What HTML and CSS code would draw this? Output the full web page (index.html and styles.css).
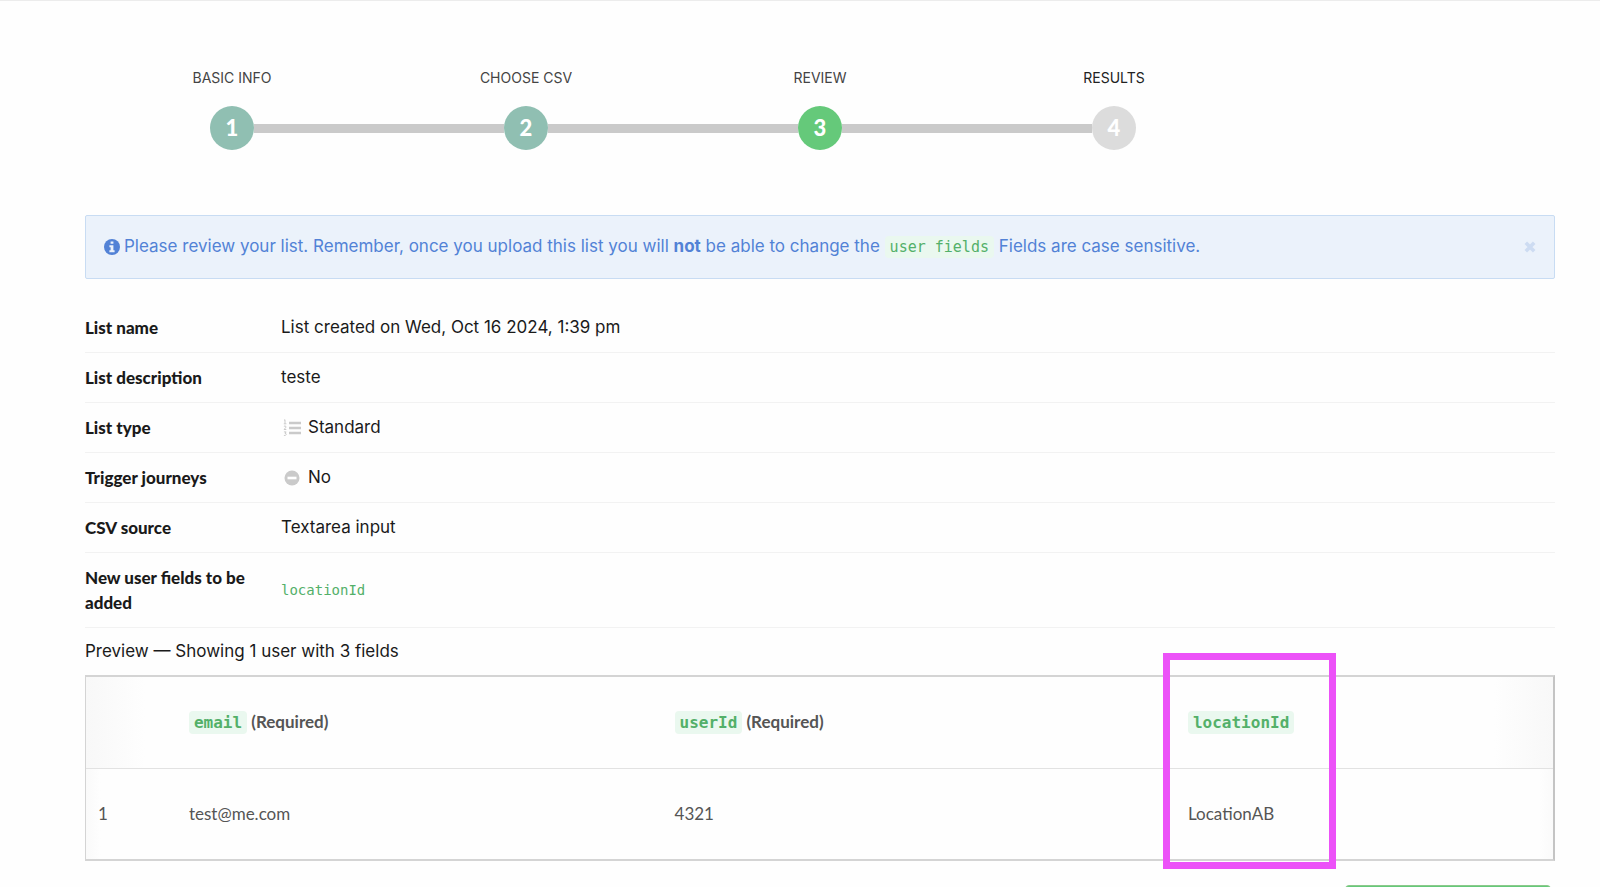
FILE: index.html
```html
<!DOCTYPE html>
<html lang="en">

<head>
    <meta charset="utf-8">
    <meta name="viewport" content="width=device-width, initial-scale=1.0">
    <title>Review list</title>
    <link rel="stylesheet" href="styles.css">
</head>

<body>

    <main>
        <ol class="steps">
            <li class="done">
                <p>BASIC INFO</p>
                <div class="track"><span class="number">1</span></div>
            </li>
            <li class="done">
                <p>CHOOSE CSV</p>
                <div class="track"><span class="number">2</span></div>
            </li>
            <li class="current">
                <p>REVIEW</p>
                <div class="track"><span class="number">3</span></div>
            </li>
            <li>
                <p>RESULTS</p>
                <div class="track"><span class="number">4</span></div>
            </li>
        </ol>

        <section class="alert">
            <svg class="info" viewBox="0 0 16 16" aria-hidden="true">
                <circle cx="8" cy="8" r="8" fill="currentColor" />
                <path d="M6.6 2.6h2.8v2.2H6.6zM5.4 6.2h4v5h1.2v2H5.4v-2h1.2v-3H5.4z" fill="#ebf2fb" />
            </svg>
            <p>Please review your list. Remember, once you upload this list you will <strong>not</strong> be able to change the <code>user fields</code> Fields are case sensitive.</p>
            <button class="close" type="button" aria-label="Close">
                <svg viewBox="0 0 10 10" aria-hidden="true">
                    <path d="M1.5 1.5l7 7M8.5 1.5l-7 7" stroke="currentColor" stroke-width="3" />
                </svg>
            </button>
        </section>

        <dl class="details">
            <div>
                <dt>List name</dt>
                <dd>List created on Wed, Oct 16 2024, 1:39 pm</dd>
            </div>
            <div>
                <dt>List description</dt>
                <dd>teste</dd>
            </div>
            <div>
                <dt>List type</dt>
                <dd>
                    <svg class="icon" viewBox="0 0 18 18" aria-hidden="true">
                        <path d="M6 4h12M6 9h12M6 14h12" stroke="currentColor" stroke-width="2.4" fill="none" />
                        <path d="M1 1.4l1-.7v4M.8 4.8h2.6M.9 7.4q1.2-1 2 0t-2 3.1h2.4M.9 12.9h2.2l-1 1.4q1.4.2 1 1.4t-2.2.7" stroke="currentColor" stroke-width="1" fill="none" />
                    </svg>
                    Standard
                </dd>
            </div>
            <div>
                <dt>Trigger journeys</dt>
                <dd>
                    <svg class="icon" viewBox="0 0 18 18" aria-hidden="true">
                        <circle cx="9" cy="9" r="7.5" fill="currentColor" />
                        <path d="M4.5 9h9" stroke="#fff" stroke-width="2.6" />
                    </svg>
                    No
                </dd>
            </div>
            <div>
                <dt>CSV source</dt>
                <dd>Textarea input</dd>
            </div>
            <div>
                <dt>New user fields to be added</dt>
                <dd><code>locationId</code></dd>
            </div>
        </dl>

        <p class="summary">Preview — Showing 1 user with 3 fields</p>

        <section class="preview">
            <table>
                <thead>
                    <tr>
                        <td class="index"></td>
                        <th class="email"><code>email</code> (Required)</th>
                        <th class="user"><code>userId</code> (Required)</th>
                        <th class="location"><code>locationId</code></th>
                    </tr>
                </thead>
                <tbody>
                    <tr>
                        <td>1</td>
                        <td>test@me.com</td>
                        <td>4321</td>
                        <td>LocationAB</td>
                    </tr>
                </tbody>
            </table>
            <div class="highlight"></div>
        </section>

        <div class="actions">
            <button class="next" type="button" aria-label="Next"></button>
        </div>
    </main>

</body>

</html>
```
FILE: styles.css
```css
* {
    box-sizing: border-box;
}

body {
    margin: 0;
    border-top: 1px solid #ececec;
    background-color: #fefefe;
    color: #1a1a1a;
    font-family: Inter, sans-serif;
    font-size: 17px;
    line-height: 25px;
}

main {
    padding: 66px 45px 0 85px;
}

p,
dl,
dd {
    margin: 0;
}

code {
    padding: 2px 5px;
    border-radius: 4px;
    background-color: #eaf8ef;
    color: #53b069;
    font-family: "DejaVu Sans Mono", monospace;
    font-size: 15px;
}

/* steps */
.steps {
    display: grid;
    grid-template-columns: repeat(4, 1fr);
    width: 80%;
    margin: 0 0 65px;
    padding: 0;
    list-style: none;
    color: #444;
    font-size: 14px;
    line-height: 22px;
    text-align: center;
}

.steps li:last-child {
    color: #222;
}

.track {
    display: flex;
    align-items: center;
    margin-top: 17px;
}

.track::before,
.track::after {
    content: "";
    flex: 1;
    height: 9px;
    background-color: #cacaca;
}

.steps li:first-child .track::before,
.steps li:last-child .track::after {
    background-color: transparent;
}

.number {
    width: 44px;
    height: 44px;
    border-radius: 50%;
    background-color: #dcdcdc;
    color: #fff;
    font-family: Lato, sans-serif;
    font-size: 22px;
    font-weight: 900;
    line-height: 44px;
}

.done .number {
    background-color: #90bfb2;
}

.current .number {
    background-color: #65c97a;
}

/* alert */
.alert {
    display: flex;
    align-items: center;
    gap: 4px;
    padding: 18px;
    border: 1px solid #c8dcf3;
    border-radius: 2px;
    background-color: #ebf2fb;
    color: #5282d6;
}

.alert p {
    flex: 1;
}

.info {
    width: 16px;
    height: 16px;
}

.close {
    width: 12px;
    height: 12px;
    padding: 0;
    border: 0;
    background: none;
    color: #cddcf2;
    cursor: pointer;
}

.close svg {
    display: block;
}

/* list details */
.details {
    margin-top: 24px;
}

.details div {
    display: grid;
    grid-template-columns: 172px 1fr;
    gap: 24px;
    align-items: center;
    padding: 12px 0;
    border-bottom: 1px solid #f2f2f2;
}

.details dt {
    font-family: Lato, sans-serif;
    font-weight: 900;
}

.details dd {
    display: flex;
    align-items: center;
    gap: 7px;
}

.details code {
    padding: 0;
    background: none;
    font-size: 14px;
}

.icon {
    width: 18px;
    height: 18px;
    margin-left: 2px;
    color: #cacaca;
}

.summary {
    padding: 11px 0;
}

/* preview table */
.preview {
    position: relative;
    border: 2px solid #d4d4d4;
    border-left-width: 1px;
    border-right-color: #c4c4c4;
}

table {
    width: 100%;
    border-collapse: collapse;
    table-layout: fixed;
    color: #555;
    font-family: Lato, sans-serif;
}

thead {
    background: linear-gradient(to right, #f8f8f8, #fefefe 4%, #fefefe 96%, #f8f8f8);
}

tbody {
    background: linear-gradient(to right, #fafafa, #fefefe 1%, #fefefe 99%, #fafafa);
}

th,
td {
    height: 91px;
    padding: 0 12px;
    text-align: left;
}

th code {
    font-size: 16px;
}

tbody td {
    border-top: 1px solid #e2e2e2;
}

.index {
    width: 6.2%;
}

.email {
    width: 33.1%;
}

.user {
    width: 35%;
}

.highlight {
    position: absolute;
    top: -24px;
    left: 73.4%;
    width: 173px;
    height: 216px;
    border: 7px solid #ec52f8;
}

.actions {
    display: flex;
    justify-content: flex-end;
    padding: 24px 4px;
}

.next {
    width: 206px;
    height: 48px;
    border: 1px solid #8cc98b;
    border-radius: 4px;
    background-color: #65c97a;
}
```
